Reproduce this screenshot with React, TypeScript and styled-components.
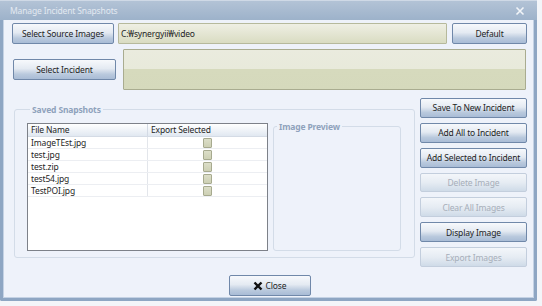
import React from "react";
import styled, { createGlobalStyle, css } from "styled-components";

const Global = createGlobalStyle`
  html, body { margin: 0; padding: 0; background: #f3f5f9; }
  body { font-family: "Noto Sans", "Open Sans", sans-serif; font-size: 8.5px; color: #1e1e1e; letter-spacing: -0.15px; }
  * { box-sizing: border-box; }
`;

const Window = styled.div`
  width: 537px;
  height: 301px;
  border: 3px solid #8ea6c3;
  border-top: 0;
  border-radius: 0 0 2px 2px;
  background: #eef2fa;
  display: flex;
  flex-direction: column;
  box-shadow: inset 0 0 0 1px #c4d2e4;
`;

const TitleBar = styled.div`
  height: 20px;
  margin: 0 -3px;
  padding: 0 10px;
  display: flex;
  align-items: center;
  justify-content: space-between;
  background: linear-gradient(#b3c3d6, #9db2ca);
  border-top: 1px solid #cfd9e6;
  color: #e3e9f1;
  font-size: 8.5px;
`;

const CloseX = styled.span`
  display: flex;
  width: 10px;
  height: 10px;
  margin-right: 2px;
`;

const Body = styled.div`
  flex: 1;
  display: flex;
  flex-direction: column;
  padding: 3px 7px 0 9px;
`;

const Row = styled.div<{ $h: number; $mt?: number }>`
  display: flex;
  align-items: stretch;
  height: ${(p) => p.$h}px;
  margin-top: ${(p) => p.$mt ?? 0}px;
`;

const Button = styled.button<{ $w?: number; $h?: number; $disabled?: boolean }>`
  font-family: inherit;
  font-size: 8.5px;
  letter-spacing: -0.15px;
  width: ${(p) => (p.$w ? `${p.$w}px` : "100%")};
  height: ${(p) => p.$h ?? 20}px;
  padding: 0;
  border-radius: 2px;
  display: flex;
  align-items: center;
  justify-content: center;
  gap: 3px;
  cursor: default;
  ${(p) =>
    p.$disabled
      ? css`
          color: #a6aeb9;
          border: 1px solid #c3cedd;
          background: linear-gradient(#f3f6fa 0%, #e6ecf3 50%, #cfdbe8 100%);
        `
      : css`
          color: #1e1e1e;
          border: 1px solid #7088a9;
          background: linear-gradient(#f7f9fc 0%, #e4eaf2 45%, #b9c9dd 75%, #a9bcd6 100%);
        `}
`;

const PathBox = styled.div`
  flex: 1;
  margin: 0 5px 0 4px;
  border: 1px solid #b6b99c;
  border-radius: 1px;
  background: linear-gradient(#efefe4, #d9dcc2);
  display: flex;
  align-items: center;
  padding-left: 2px;
`;

const IncidentCol = styled.div`
  width: 111px;
  display: flex;
  align-items: center;
  padding-left: 1px;
`;

const IncidentBox = styled.div`
  flex: 1;
  margin-right: 1px;
  border: 1px solid #a9ac90;
  border-radius: 1px;
  background: linear-gradient(#eaebde 0%, #e8eadb 48%, #d6dabd 50%, #d5d9bc 100%);
`;

const Main = styled.div`
  display: flex;
  margin-top: 8px;
  height: 169px;
`;

const Group = styled.fieldset`
  margin: 6px 0 0 2px;
  padding: 0 12px 6px 12px;
  width: 401px;
  height: 154px;
  border: 1px solid #d3dce8;
  border-radius: 3px;
  display: flex;
  gap: 5px;
  align-items: flex-end;
`;

const Legend = styled.legend`
  padding: 0 2px;
  margin-left: 3px;
  color: #8fa2bc;
  font-weight: bold;
  font-size: 8.5px;
  line-height: 11px;
`;

const List = styled.div`
  width: 241px;
  height: 128px;
  border: 1px solid #7d8189;
  background: #fff;
`;

const Header = styled.div`
  display: grid;
  grid-template-columns: 120px 1fr;
  height: 13px;
  background: linear-gradient(#ffffff, #e1e8f1);
  border-bottom: 1px solid #d4dbe5;
`;

const HeadCell = styled.div<{ $divider?: boolean }>`
  padding-left: 3px;
  line-height: 12px;
  border-right: ${(p) => (p.$divider ? "1px solid #d3dae4" : "0")};
`;

const ListRow = styled.div`
  display: grid;
  grid-template-columns: 120px 1fr;
  height: 12px;
  border-bottom: 1px solid #eceef2;
`;

const Cell = styled.div<{ $divider?: boolean; $center?: boolean }>`
  padding-left: ${(p) => (p.$center ? 0 : 3)}px;
  line-height: 11px;
  display: flex;
  align-items: center;
  justify-content: ${(p) => (p.$center ? "center" : "flex-start")};
  border-right: ${(p) => (p.$divider ? "1px solid #e3e6eb" : "0")};
`;

const Check = styled.span`
  width: 9px;
  height: 10px;
  border: 1px solid #a7aa8f;
  border-radius: 1px;
  background: linear-gradient(#dcdec8, #cdd0b4);
`;

const Preview = styled.fieldset`
  margin: 0;
  padding: 0;
  width: 128px;
  height: 130px;
  border: 1px solid #d3dce8;
  border-radius: 3px;
`;

const Side = styled.div`
  margin-left: 5px;
  width: 107px;
  display: flex;
  flex-direction: column;
  gap: 5px;
`;

const Footer = styled.div`
  display: flex;
  justify-content: center;
  margin-top: 8px;
`;

const files = ["ImageTEst.jpg", "test.jpg", "test.zip", "test54.jpg", "TestPOI.jpg"];

const sideButtons: { label: string; disabled?: boolean }[] = [
  { label: "Save To New Incident" },
  { label: "Add All to Incident" },
  { label: "Add Selected to Incident" },
  { label: "Delete Image", disabled: true },
  { label: "Clear All Images", disabled: true },
  { label: "Display Image" },
  { label: "Export Images", disabled: true },
];

export default function App() {
  return (
    <>
      <Global />
      <Window>
        <TitleBar>
          <span>Manage Incident Snapshots</span>
          <CloseX>
            <svg width="10" height="10" viewBox="0 0 10 10">
              <path d="M1.5 1.5L8.5 8.5M8.5 1.5L1.5 8.5" stroke="#f2f5f9" strokeWidth="1.6" />
            </svg>
          </CloseX>
        </TitleBar>
        <Body>
          <Row $h={21}>
            <Button $w={102} $h={21}>Select Source Images</Button>
            <PathBox>C:₩synergyii₩video</PathBox>
            <Button $w={75} $h={21}>Default</Button>
          </Row>
          <Row $h={41} $mt={5}>
            <IncidentCol>
              <Button $w={103} $h={21}>Select Incident</Button>
            </IncidentCol>
            <IncidentBox />
          </Row>
          <Main>
            <Group>
              <Legend>Saved Snapshots</Legend>
              <List>
                <Header>
                  <HeadCell $divider>File Name</HeadCell>
                  <HeadCell>Export Selected</HeadCell>
                </Header>
                {files.map((f) => (
                  <ListRow key={f}>
                    <Cell $divider>{f}</Cell>
                    <Cell $center>
                      <Check />
                    </Cell>
                  </ListRow>
                ))}
              </List>
              <Preview>
                <Legend>Image Preview</Legend>
              </Preview>
            </Group>
            <Side>
              {sideButtons.map((b) => (
                <Button key={b.label} $disabled={b.disabled}>
                  {b.label}
                </Button>
              ))}
            </Side>
          </Main>
          <Footer>
            <Button $w={82} $h={21}>
              <svg width="10" height="10" viewBox="0 0 10 10">
                <path d="M1.5 1.5L8.5 8.5M8.5 1.5L1.5 8.5" stroke="#111" strokeWidth="2.4" />
              </svg>
              Close
            </Button>
          </Footer>
        </Body>
      </Window>
    </>
  );
}
